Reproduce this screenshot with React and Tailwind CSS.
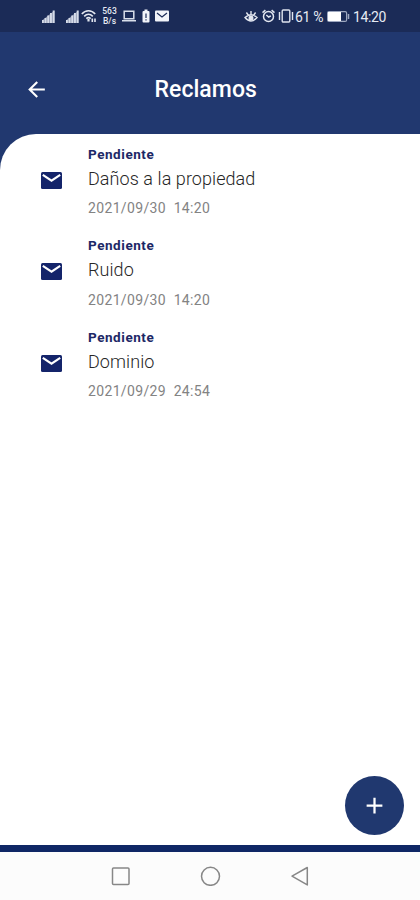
import { MdArrowBack, MdAdd } from 'react-icons/md'

const claims = [
  { id: 1, status: 'Pendiente', title: 'Daños a la propiedad', date: '2021/09/30', time: '14:20' },
  { id: 2, status: 'Pendiente', title: 'Ruido', date: '2021/09/30', time: '14:20' },
  { id: 3, status: 'Pendiente', title: 'Dominio', date: '2021/09/29', time: '24:54' },
]

function Signal({ className = '' }) {
  return (
    <svg className={`shrink-0 ${className}`} width="14" height="13" viewBox="0 0 14 13" fill="#d5dbe8">
      <path d="M1 13V10.5L13.5 0.5V13z" fill="#8992ac" />
      <rect x="1" y="10" width="1.8" height="3" />
      <rect x="3.6" y="8" width="1.9" height="5" />
      <rect x="6.3" y="5.5" width="1.9" height="7.5" />
      <rect x="9" y="3" width="1.9" height="10" />
      <rect x="11.7" y="0.5" width="1.9" height="12.5" />
    </svg>
  )
}

function Wifi() {
  return (
    <svg className="ml-[2px] shrink-0" width="16" height="14" viewBox="0 0 16 14" fill="none" stroke="#e3e7f0" strokeWidth="1.6">
      <path d="M0.8 5C4.6 0.6 10.4 0.6 14.2 5" />
      <path d="M3.2 7.4C6 4.6 9 4.6 11.8 7.4" />
      <path d="M5.3 9.6C6.8 8.2 8.2 8.2 9.7 9.6" />
      <path d="M7.5 10v2.5" strokeWidth="2.2" />
      <path d="M11.3 9.5v3.5M14 9.5v3.5" strokeWidth="1.6" />
    </svg>
  )
}

function Mail() {
  return (
    <svg className="ml-[2px] mt-[38px] shrink-0" width="21" height="17" viewBox="0 0 21 17">
      <rect width="21" height="17" rx="1.5" fill="#14246a" />
      <path d="M1.8 2.8L10.5 8.7L19.2 2.8" fill="none" stroke="#fff" strokeWidth="2.1" />
    </svg>
  )
}

function StatusBar() {
  return (
    <div className="flex h-8 shrink-0 items-center bg-[#1b2b57] pl-[41px] text-[#e6eaf2]">
      <Signal />
      <Signal className="ml-[10px]" />
      <Wifi />
      <div className="ml-[4px] w-[17px] shrink-0 text-center text-[8.5px] font-medium leading-[10px]">
        <div>563</div>
        <div>B/s</div>
      </div>
      <svg className="ml-[4px] shrink-0" width="14" height="12" viewBox="0 0 14 12" fill="none" stroke="#d9dfeb" strokeWidth="1.5">
        <path d="M2.2 1.2h9.6v7.5H2.2zM0 10.8h14" />
      </svg>
      <svg className="ml-[6px] shrink-0" width="8" height="14" viewBox="0 0 8 14">
        <path d="M2.5 0.5h3V2H6.5Q7.5 2 7.5 3V12.5Q7.5 13.5 6.5 13.5H1.5Q0.5 13.5 0.5 12.5V3Q0.5 2 1.5 2h1z" fill="#f2f4f9" />
        <path d="M4 4.5v4.5M4 10.2v1.2" stroke="#1b2b57" strokeWidth="1.2" />
      </svg>
      <svg className="ml-[5px] shrink-0" width="14" height="12" viewBox="0 0 14 12">
        <rect y="0.5" width="14" height="11" rx="1" fill="#f2f4f9" />
        <path d="M2 3L7 7l5-4" fill="none" stroke="#1b2b57" strokeWidth="1.2" />
      </svg>

      {/* Right side */}
      <svg className="ml-[75px] shrink-0" width="14" height="13" viewBox="0 0 14 13" fill="none" stroke="#e3e7f0" strokeWidth="1.4">
        <path d="M1 7.5Q7 2 13 7.5Q7 14.5 1 7.5zM7 1v4M2.4 2.5l1.8 2.5M11.6 2.5l-1.8 2.5" />
        <circle cx="7" cy="8" r="1.8" fill="#e3e7f0" />
      </svg>
      <svg className="ml-[3px] shrink-0" width="15" height="14" viewBox="0 0 15 14" fill="none" stroke="#e3e7f0" strokeWidth="1.5">
        <circle cx="7.5" cy="7.5" r="5" />
        <path d="M1.5 3.6L4.4 1.2M13.5 3.6L10.6 1.2M5.3 6l2.4 2 2.2-1.2" />
      </svg>
      <svg className="ml-[2px] shrink-0" width="16" height="14" viewBox="0 0 16 14" fill="none" stroke="#dfe4ee" strokeWidth="1.4">
        <rect x="4.2" y="1" width="7.6" height="12" rx="1" />
        <path d="M1.5 3v8M14.5 3v8" />
      </svg>
      <span className="ml-px w-[31px] shrink-0 whitespace-nowrap pt-px text-[14px] leading-none tracking-[-0.3px]">61 %</span>
      <svg className="ml-px shrink-0" width="23" height="11" viewBox="0 0 23 11">
        <rect x="0.6" y="0.6" width="19" height="9.8" rx="1.5" fill="none" stroke="#9ea8c0" strokeWidth="1.2" />
        <rect x="1" y="1" width="13" height="9" fill="#fff" />
        <path d="M21.5 3v5" stroke="#9ea8c0" strokeWidth="1.5" />
      </svg>
      <span className="ml-[3px] whitespace-nowrap pt-px text-[14px] leading-none tracking-[-0.4px]">14:20</span>
    </div>
  )
}

function ClaimRow({ claim }) {
  return (
    <li className="flex h-[91.3px] pl-[38.5px]">
      <Mail />
      <div className="ml-[26.5px] pt-3">
        <p className="text-[13.5px] font-bold leading-4 tracking-[0.55px] text-[#1d2866]">{claim.status}</p>
        <p className="mt-1.5 text-[18px] font-light leading-[22px] tracking-[0.07px] text-[#262626]">{claim.title}</p>
        <p className="mt-[10.4px] whitespace-pre text-[14px] leading-4 tracking-[0.35px] text-[#838383]">
          {`${claim.date}  ${claim.time}`}
        </p>
      </div>
    </li>
  )
}

function NavBar() {
  return (
    <nav className="flex h-12 shrink-0 items-center bg-[#fcfcfc] pl-[111px]">
      <svg width="198" height="20" viewBox="0 0 198 20" fill="none" stroke="#878787" strokeWidth="1.5">
        <rect x="1.5" y="2" width="16.5" height="16.5" rx="1" />
        <circle cx="99.5" cy="10.3" r="9" />
        <path d="M196.3 1.5v17.4L181 10.2z" strokeLinejoin="round" />
      </svg>
    </nav>
  )
}

export default function App() {
  return (
    <div className="flex h-[900px] w-[420px] flex-col overflow-hidden bg-[#21386f] font-['Roboto',sans-serif]">
      <StatusBar />

      {/* Header */}
      <header className="grid h-[102px] shrink-0 grid-cols-[154.5px_1fr] items-center pt-[12px] text-white">
        <MdArrowBack size={25} className="ml-6" />
        <h1 className="pt-px text-[23px] font-medium leading-7 tracking-[0.05px]">Reclamos</h1>
      </header>

      <main className="relative h-[711px] shrink-0 rounded-tl-[36px] bg-white">
        <ul>
          {claims.map((claim) => (
            <ClaimRow key={claim.id} claim={claim} />
          ))}
        </ul>
        <button
          aria-label="Agregar"
          className="absolute bottom-[10px] right-[16px] flex size-[59px] items-center justify-center rounded-full bg-[#20386f] text-white"
        >
          <MdAdd size={27} />
        </button>
      </main>

      <div className="h-[7px] shrink-0 bg-[#0f2765]" />
      <NavBar />
    </div>
  )
}
